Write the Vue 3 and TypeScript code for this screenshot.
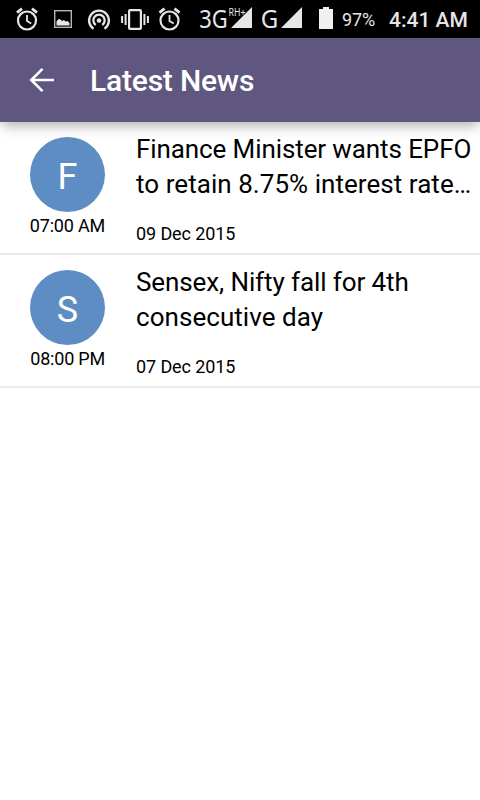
<script setup lang="ts">
interface NewsItem {
  initial: string
  time: string
  lines: string[]
  date: string
}

const news: NewsItem[] = [
  {
    initial: 'F',
    time: '07:00 AM',
    lines: ['Finance Minister wants EPFO', 'to retain 8.75% interest rate…'],
    date: '09 Dec 2015',
  },
  {
    initial: 'S',
    time: '08:00 PM',
    lines: ['Sensex, Nifty fall for 4th', 'consecutive day'],
    date: '07 Dec 2015',
  },
]
</script>

<template>
  <div class="screen">
    <header class="status">
      <svg class="status-icons" width="336" height="38" viewBox="0 0 336 38">
        <defs>
          <g id="alarm" fill="none" stroke="#e6e6e6">
            <circle cx="11" cy="13.500" r="9" stroke-width="2.200" />
            <path d="M11 8v6l4.200 2.600" stroke-width="1.800" />
            <path d="M1 5.700L6 1.700M21 5.700L16 1.700" stroke-width="2.800" />
          </g>
        </defs>
        <use href="#alarm" x="16" y="7" />
        <rect x="54.700" y="10.700" width="16.600" height="16.600" fill="none" stroke="#b4b4b4" stroke-width="1.400" />
        <path d="M56.500 25.500v-4l2-2.500 2 .5 1.500 1.500 2-1 1.500 1.500 2-.5 2 2v2.500z" fill="#e6e6e6" />
        <g fill="none" stroke="#e6e6e6" stroke-width="2.300">
          <path d="M93.500 28.700a9.900 9.900 0 1 1 11 0" />
          <path d="M95.700 25a5.700 5.700 0 1 1 6.600 0" />
          <circle cx="99" cy="20.500" r="2.300" fill="#e6e6e6" stroke="none" />
        </g>
        <rect x="129.100" y="10.100" width="11.800" height="18.800" rx="1" fill="none" stroke="#e6e6e6" stroke-width="2.200" />
        <path d="M122.100 16v7M125.600 14v11M144.400 14v11M147.900 16v7" stroke="#e6e6e6" stroke-width="2" />
        <use href="#alarm" x="158.500" y="7" />
        <text class="net" x="199.300" y="27.700" textLength="28.500" lengthAdjust="spacingAndGlyphs">3G</text>
        <path d="M252 7v21h-21z" fill="#e6e6e6" />
        <text class="roam" x="228.500" y="16" textLength="17" lengthAdjust="spacingAndGlyphs">RH+</text>
        <text class="net" x="260.700" y="27.700" textLength="17.500" lengthAdjust="spacingAndGlyphs">G</text>
        <path d="M302 7v21h-21z" fill="#e6e6e6" />
        <path d="M319 9h4v-2h6v2h4v20h-14z" fill="#f0f0f0" />
      </svg>
      <span class="battery">97%</span>
      <span class="clock">4:41 AM</span>
    </header>

    <div class="toolbar">
      <svg class="back" width="26" height="26" viewBox="0 0 26 26">
        <path d="M25 13H2.500M13.500 1.800L2.300 13l11.200 11.200" fill="none" stroke="#fff" stroke-width="2.600" />
      </svg>
      <h1>Latest News</h1>
    </div>

    <main>
      <article v-for="item in news" :key="item.initial" class="row">
        <div class="side">
          <div class="avatar">{{ item.initial }}</div>
          <div class="time">{{ item.time }}</div>
        </div>
        <div class="body">
          <h2><span v-for="line in item.lines" :key="line">{{ line }}</span></h2>
          <div class="date">{{ item.date }}</div>
        </div>
      </article>
    </main>
  </div>
</template>

<style>
body {
  background: #fff;
}
</style>

<style scoped>
.screen {
  width: 480px;
  height: 800px;
  overflow: hidden;
  background: #fff;
  color: #000;
  font-family: Roboto, sans-serif;
}
.status {
  display: flex;
  height: 38px;
  background: #000;
  color: #e6e6e6;
  line-height: 39px;
  white-space: nowrap;
}
.status-icons {
  display: block;
  flex: none;
}
.net {
  font: 26px 'Noto Sans', sans-serif;
  fill: #e6e6e6;
}
.roam {
  font: 10px 'Noto Sans', sans-serif;
  fill: #e6e6e6;
}
.battery {
  width: 47px;
  padding-left: 6px;
  box-sizing: border-box;
  font-size: 18px;
  letter-spacing: -0.1px;
}
.clock {
  padding-left: 6px;
  font-size: 21px;
  font-weight: 500;
  line-height: 40px;
}
.toolbar {
  position: relative;
  display: flex;
  align-items: center;
  height: 84px;
  padding-left: 29px;
  gap: 35px;
  background: #5f5780;
  box-shadow: 0 6px 12px -2px rgba(0, 0, 0, 0.3);
}
.back {
  flex: none;
}
h1 {
  margin: 2px 0 0;
  color: #fff;
  font-size: 30px;
  font-weight: 500;
  line-height: 36px;
  letter-spacing: -0.2px;
}
.row {
  display: flex;
  box-sizing: border-box;
  height: 133px;
  padding: 15px 0 0 30px;
  gap: 31px;
  border-bottom: 2px solid #ebebeb;
}
.side {
  width: 75px;
}
.avatar {
  width: 75px;
  height: 75px;
  border-radius: 50%;
  background: #5d8dc3;
  color: #fff;
  font-size: 36px;
  line-height: 81px;
  text-align: center;
}
.time {
  display: flex;
  justify-content: flex-end;
  margin-top: 3px;
  font-size: 18px;
  line-height: 22px;
  letter-spacing: -0.2px;
  white-space: nowrap;
}
.body {
  margin-top: -5px;
}
h2 {
  margin: 0;
  font-size: 26px;
  font-weight: 400;
  line-height: 35px;
  letter-spacing: -0.1px;
  white-space: nowrap;
}
h2 span {
  display: block;
}
h2 span + span {
  letter-spacing: 0.05px;
}
.date {
  margin-top: 21px;
  font-size: 18px;
  line-height: 22px;
  letter-spacing: -0.1px;
}
</style>
